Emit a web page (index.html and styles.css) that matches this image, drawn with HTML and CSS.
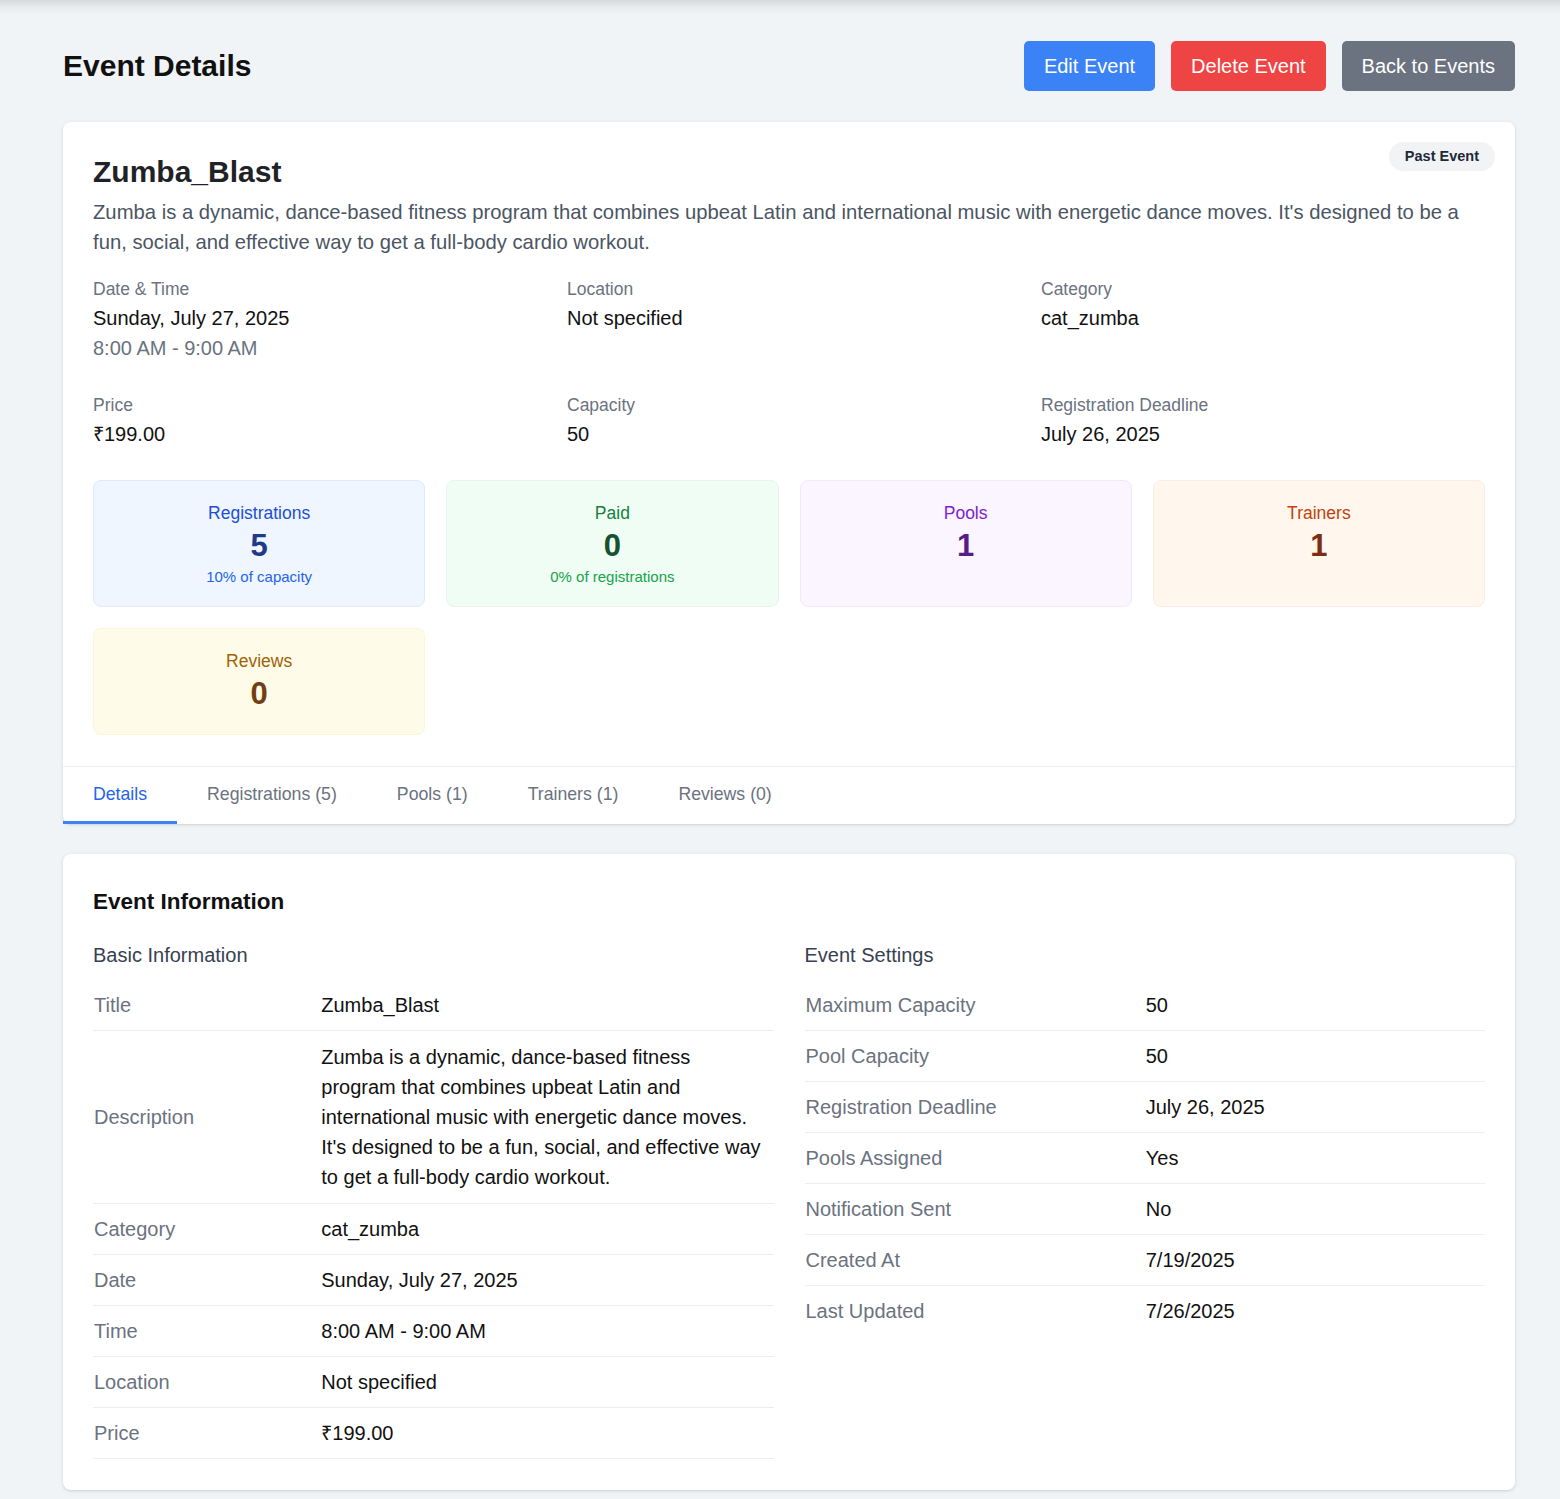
FILE: index.html
```html
<!DOCTYPE html>
<html lang="en">
<head>
<meta charset="utf-8">
<title>Event Details</title>
<link rel="stylesheet" href="styles.css">
</head>
<body>
<div class="page">
  <div class="page-head">
    <h1 class="page-title">Event Details</h1>
    <div class="actions">
      <button class="btn btn-blue">Edit Event</button>
      <button class="btn btn-red">Delete Event</button>
      <button class="btn btn-gray">Back to Events</button>
    </div>
  </div>

  <section class="card summary">
    <div class="summary-body">
      <span class="badge">Past Event</span>
      <h2 class="event-name">Zumba_Blast</h2>
      <p class="event-desc">Zumba is a dynamic, dance-based fitness program that combines upbeat Latin and international music with energetic dance moves. It's designed to be a fun, social, and effective way to get a full-body cardio workout.</p>
      <div class="facts">
        <div class="fact">
          <div class="fact-label">Date &amp; Time</div>
          <div class="fact-value">Sunday, July 27, 2025</div>
          <div class="fact-sub">8:00 AM - 9:00 AM</div>
        </div>
        <div class="fact">
          <div class="fact-label">Location</div>
          <div class="fact-value">Not specified</div>
        </div>
        <div class="fact">
          <div class="fact-label">Category</div>
          <div class="fact-value">cat_zumba</div>
        </div>
        <div class="fact">
          <div class="fact-label">Price</div>
          <div class="fact-value">₹199.00</div>
        </div>
        <div class="fact">
          <div class="fact-label">Capacity</div>
          <div class="fact-value">50</div>
        </div>
        <div class="fact">
          <div class="fact-label">Registration Deadline</div>
          <div class="fact-value">July 26, 2025</div>
        </div>
      </div>
      <div class="stats">
        <div class="stat stat-blue">
          <div class="stat-label">Registrations</div>
          <div class="stat-num">5</div>
          <div class="stat-sub">10% of capacity</div>
        </div>
        <div class="stat stat-green">
          <div class="stat-label">Paid</div>
          <div class="stat-num">0</div>
          <div class="stat-sub">0% of registrations</div>
        </div>
        <div class="stat stat-purple">
          <div class="stat-label">Pools</div>
          <div class="stat-num">1</div>
        </div>
        <div class="stat stat-orange">
          <div class="stat-label">Trainers</div>
          <div class="stat-num">1</div>
        </div>
        <div class="stat stat-yellow">
          <div class="stat-label">Reviews</div>
          <div class="stat-num">0</div>
        </div>
      </div>
    </div>
    <nav class="tabs">
      <a class="tab active">Details</a>
      <a class="tab">Registrations (5)</a>
      <a class="tab">Pools (1)</a>
      <a class="tab">Trainers (1)</a>
      <a class="tab">Reviews (0)</a>
    </nav>
  </section>

  <section class="card info">
    <h3 class="info-title">Event Information</h3>
    <div class="info-cols">
      <div class="info-col">
        <h4 class="info-sub">Basic Information</h4>
        <table class="kv kv-third">
          <tr><th>Title</th><td>Zumba_Blast</td></tr>
          <tr><th>Description</th><td>Zumba is a dynamic, dance-based fitness program that combines upbeat Latin and international music with energetic dance moves. It's designed to be a fun, social, and effective way to get a full-body cardio workout.</td></tr>
          <tr><th>Category</th><td>cat_zumba</td></tr>
          <tr><th>Date</th><td>Sunday, July 27, 2025</td></tr>
          <tr><th>Time</th><td>8:00 AM - 9:00 AM</td></tr>
          <tr><th>Location</th><td>Not specified</td></tr>
          <tr><th>Price</th><td>₹199.00</td></tr>
        </table>
      </div>
      <div class="info-col">
        <h4 class="info-sub">Event Settings</h4>
        <table class="kv kv-half">
          <tr><th>Maximum Capacity</th><td>50</td></tr>
          <tr><th>Pool Capacity</th><td>50</td></tr>
          <tr><th>Registration Deadline</th><td>July 26, 2025</td></tr>
          <tr><th>Pools Assigned</th><td>Yes</td></tr>
          <tr><th>Notification Sent</th><td>No</td></tr>
          <tr><th>Created At</th><td>7/19/2025</td></tr>
          <tr class="last"><th>Last Updated</th><td>7/26/2025</td></tr>
        </table>
      </div>
    </div>
  </section>
</div>
</body>
</html>
```

FILE: styles.css
```css
* { box-sizing: border-box; }
html, body { margin: 0; padding: 0; }
body {
  background: linear-gradient(to bottom, #d6d9dc 0, #eaedef 8px, #f1f4f6 14px) no-repeat, #f1f4f6;
  font-family: "Liberation Sans", Arial, Helvetica, sans-serif;
  color: #111827;
  min-height: 1499px;
}
.page {
  padding: 41px 45px 30px 63px;
}
.page-head {
  display: flex;
  align-items: center;
  justify-content: space-between;
  height: 50px;
  margin-bottom: 31px;
}
.page-title {
  margin: 0;
  font-size: 30px;
  font-weight: 700;
  color: #111;
}
.actions { display: flex; gap: 16px; }
.btn {
  height: 50px;
  border: 0;
  border-radius: 5px;
  padding: 0 20px;
  font-family: inherit;
  font-size: 20px;
  color: #fff;
  cursor: pointer;
}
.btn-blue { background: #3b82f6; }
.btn-red { background: #ef4444; }
.btn-gray { background: #6b7280; }

.card {
  background: #fff;
  border-radius: 8px;
  box-shadow: 0 1px 4px rgba(0,0,0,0.10), 0 1px 2px rgba(0,0,0,0.06);
}
.summary { margin-bottom: 30px; }
.summary-body {
  position: relative;
  padding: 30px 30px 31px;
}
.badge {
  position: absolute;
  top: 20px;
  right: 20px;
  background: #f1f3f5;
  color: #1f2937;
  font-size: 14.5px;
  font-weight: 700;
  padding: 6px 16px 6px 16px;
  border-radius: 999px;
  line-height: 17px;
}
.event-name {
  margin: 0;
  font-size: 30px;
  line-height: 40px;
  font-weight: 700;
  color: #1f2328;
}
.event-desc {
  margin: 5px 0 0;
  font-size: 20.25px;
  line-height: 30px;
  color: #4b5563;
}
.facts {
  margin-top: 20px;
  display: grid;
  grid-template-columns: repeat(3, 1fr);
  column-gap: 30px;
  row-gap: 30px;
}
.fact-label {
  font-size: 17.5px;
  line-height: 25px;
  color: #6b7280;
}
.fact-value {
  margin-top: 1px;
  font-size: 20px;
  line-height: 30px;
  color: #111;
}
.fact-sub {
  font-size: 20px;
  line-height: 30px;
  color: #6b7280;
}
.stats {
  margin-top: 31px;
  display: grid;
  grid-template-columns: repeat(4, 1fr);
  gap: 21px;
}
.stat {
  border-radius: 8px;
  border: 1px solid transparent;
  padding: 20px 16px 19px;
  text-align: center;
}
.stat-label { font-size: 17.5px; line-height: 24px; }
.stat-num { font-size: 31px; line-height: 42px; font-weight: 700; }
.stat-sub { font-size: 15px; line-height: 20px; margin-top: 0; }
.stat-blue { background: #eff6ff; border-color: #dfeafd; }
.stat-blue .stat-label { color: #1d4ed8; }
.stat-blue .stat-num { color: #1e3a8a; }
.stat-blue .stat-sub { color: #2563eb; }
.stat-green { background: #f0fdf4; border-color: #e3f8ea; }
.stat-green .stat-label { color: #15803d; }
.stat-green .stat-num { color: #14532d; }
.stat-green .stat-sub { color: #16a34a; }
.stat-purple { background: #faf5ff; border-color: #f1e8fc; }
.stat-purple .stat-label { color: #7e22ce; }
.stat-purple .stat-num { color: #581c87; }
.stat-orange { background: #fff7ed; border-color: #fcede0; }
.stat-orange .stat-label { color: #c2410c; }
.stat-orange .stat-num { color: #7c2d12; }
.stat-yellow { background: #fefce8; border-color: #fbf6d8; }
.stat-yellow .stat-label { color: #a16207; }
.stat-yellow .stat-num { color: #713f12; }

.tabs {
  display: flex;
  border-top: 1px solid #eceef1;
  height: 58px;
}
.tab {
  display: flex;
  align-items: center;
  padding: 0 30px;
  font-size: 17.7px;
  color: #6b7280;
  border-bottom: 3px solid transparent;
}
.tab.active {
  color: #2563eb;
  border-bottom-color: #3b82f6;
}

.info { padding: 30px 30px 31px; }
.info-title {
  margin: 0;
  font-size: 22.5px;
  line-height: 36px;
  font-weight: 700;
  color: #111;
}
.info-cols {
  margin-top: 21px;
  display: grid;
  grid-template-columns: 1fr 1fr;
  column-gap: 31px;
}
.info-sub {
  margin: 0 0 11px;
  font-size: 20px;
  line-height: 28px;
  font-weight: 400;
  color: #374151;
}
.kv {
  width: 100%;
  border-collapse: collapse;
}
.kv tr { border-bottom: 1px solid #eceef1; }
.kv tr.last { border-bottom: 0; }
.kv th, .kv td {
  padding: 10px 1px;
  font-size: 20px;
  line-height: 30px;
  text-align: left;
  vertical-align: middle;
}
.kv td { padding-right: 7px; }
.kv th { font-weight: 400; color: #6b7280; }
.kv td { color: #111; }
.kv-third th { width: 33.4%; }
.kv-half th { width: 50%; }
.kv-third tr:nth-child(2) td { padding-top: 11px; padding-bottom: 11px; }
```
